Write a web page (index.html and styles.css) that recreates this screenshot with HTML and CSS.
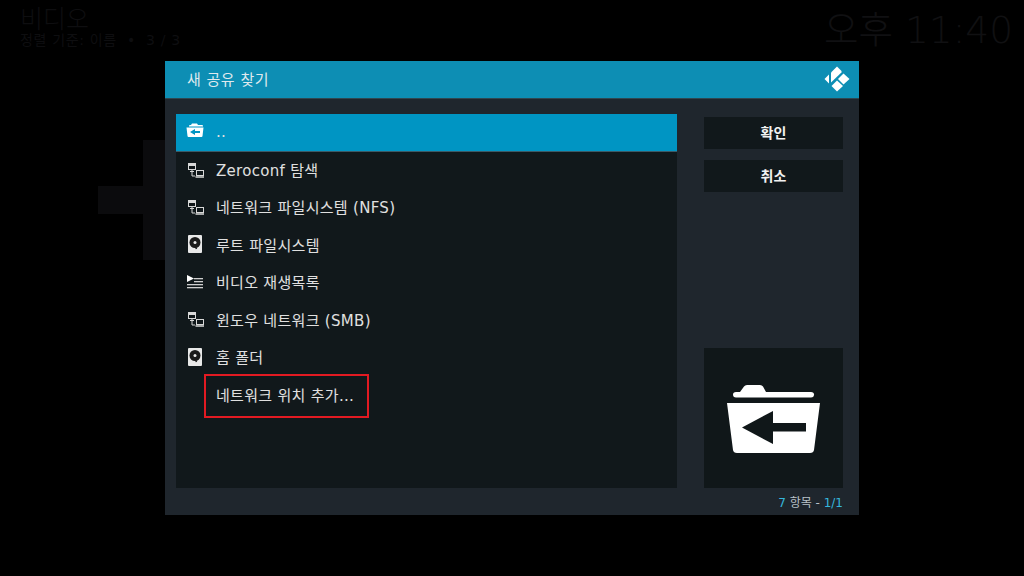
FILE: index.html
```html
<!DOCTYPE html>
<html lang="ko">
<head>
<meta charset="utf-8">
<title>새 공유 찾기</title>
<link rel="stylesheet" href="styles.css">
</head>
<body>
<svg class="bg-plus" width="67" height="120" viewBox="0 0 67 120"><path d="M45 0H67V120H45V74H0V46H45Z" fill="#0b0b0d"/></svg>
<header class="topbar">
  <div class="crumbs">
    <div class="crumb-title">비디오</div>
    <div class="crumb-sub">정렬 기준: 이름 &nbsp;•&nbsp; 3 / 3</div>
  </div>
  <div class="clock">오후 11:40</div>
</header>
<main class="dialog">
  <div class="dialog-head">
    <span class="dialog-title">새 공유 찾기</span>
    <svg class="logo" width="26" height="26" viewBox="0 0 26 26" fill="#fff">
      <path d="M0.500 13L5 8.500V17.500Z"/>
      <path d="M13 0.500L17 4.500Q18 5.500 17.400 6.500L7 16.500V6.500Z"/>
      <path d="M19.500 7.500L25.500 13L19.500 18.500L14 13Z"/>
      <path d="M13 14.500L19 20L13 25.500L7.500 20Z"/>
    </svg>
  </div>
  <div class="dialog-body">
    <ul class="list">
      <li class="row selected">
        <svg class="ico" width="20" height="20" viewBox="0 0 20 20"><use href="#i-up"/></svg>
        <span>..</span>
      </li>
      <li class="row"><svg class="ico" width="20" height="20" viewBox="0 0 20 20"><use href="#i-net"/></svg><span>Zeroconf 탐색</span></li>
      <li class="row"><svg class="ico" width="20" height="20" viewBox="0 0 20 20"><use href="#i-net"/></svg><span>네트워크 파일시스템 (NFS)</span></li>
      <li class="row"><svg class="ico" width="20" height="20" viewBox="0 0 20 20"><use href="#i-hdd"/></svg><span>루트 파일시스템</span></li>
      <li class="row"><svg class="ico" width="20" height="20" viewBox="0 0 20 20"><use href="#i-pl"/></svg><span>비디오 재생목록</span></li>
      <li class="row"><svg class="ico" width="20" height="20" viewBox="0 0 20 20"><use href="#i-net"/></svg><span>윈도우 네트워크 (SMB)</span></li>
      <li class="row"><svg class="ico" width="20" height="20" viewBox="0 0 20 20"><use href="#i-hdd"/></svg><span>홈 폴더</span></li>
      <li class="row"><span class="ico"></span><span class="mark">네트워크 위치 추가...</span></li>
    </ul>
    <aside class="side">
      <button class="btn">확인</button>
      <button class="btn">취소</button>
      <div class="preview">
        <svg width="93" height="69" viewBox="0 0 93 69" fill="#fff">
          <path d="M13 7L17 1.500Q18 0 20 0H33Q35 0 36 1.500L39 7Z"/>
          <path d="M6 9.500Q6 7 9 7H84Q87 7 87 9.500Q87 12.500 84 12.500H9Q6 12.500 6 9.500Z"/>
          <path fill-rule="evenodd" d="M0 18H93L87 65Q86.500 68 83 68H10Q6.500 68 6 65ZM15 42.500L46 59V46.500H79V38H46V26Z"/>
        </svg>
      </div>
    </aside>
  </div>
  <div class="dialog-foot"><b>7</b> 항목 - <b>1/1</b></div>
</main>
<svg width="0" height="0" class="defs">
  <defs>
    <g id="i-up" fill="#fff">
      <path d="M4 4Q4 3 5 3H6L7 1.500H12L13 3H17Q18 3 18 4V4.500H4Z"/>
      <path fill-rule="evenodd" d="M1.500 5.500H18.500L17.500 14Q17.400 15 16.500 15H3.500Q2.600 15 2.500 14ZM5 10L10 13V11H15V9H10V7Z"/>
    </g>
    <g id="i-net" fill="none" stroke="#d8d8d8" stroke-width="1">
      <rect x="3.500" y="3.500" width="7" height="6" fill="#11171a"/>
      <rect x="3.500" y="3.500" width="7" height="2" fill="#d8d8d8"/>
      <path d="M5 11.500H9M7 10V16H10"/>
      <rect x="11.500" y="10.500" width="7" height="5"/>
      <path d="M10.500 17H19" stroke-width="1.500"/>
    </g>
    <g id="i-hdd">
      <rect x="3" y="1" width="14" height="18" rx="1" fill="#e8e8e8"/>
      <circle cx="10" cy="8.500" r="5.500" fill="#1a1a1a"/>
      <circle cx="10" cy="8.500" r="1.500" fill="#e8e8e8"/>
      <path d="M10 12L11.500 15" stroke="#1a1a1a" stroke-width="1.500"/>
    </g>
    <g id="i-pl" fill="#cfcfcf">
      <path d="M2 3L9 6.500L2 10Z" fill="#fff"/>
      <rect x="9" y="6" width="9" height="1.300"/>
      <rect x="9" y="9" width="9" height="1.300"/>
      <rect x="2" y="12" width="16" height="1.300"/>
      <rect x="2" y="15" width="16" height="1.300"/>
    </g>
  </defs>
</svg>
</body>
</html>
```
FILE: styles.css
```css
* { box-sizing: border-box; }
html, body { margin: 0; height: 100%; }
body {
  position: relative;
  width: 1024px;
  height: 576px;
  overflow: hidden;
  background: #000;
  font-family: "DejaVu Sans", "Noto Sans CJK KR", sans-serif;
  color: #e8e8e8;
}
.defs { position: absolute; }
.bg-plus { position: absolute; left: 98px; top: 140px; }
.topbar {
  display: flex;
  justify-content: space-between;
  padding: 6px 11px 0 20px;
}
.crumb-title { font-size: 25px; line-height: 27px; color: #0e0e10; font-weight: 200; }
.crumb-sub { font-size: 14px; line-height: 15px; color: #0e0e10; letter-spacing: 0.65px; }
.clock { font-size: 37.500px; line-height: 44px; margin-top: 2px; color: #101012; font-weight: 200; }
.dialog {
  position: absolute;
  left: 165px;
  top: 61px;
  width: 694px;
  height: 454px;
  display: flex;
  flex-direction: column;
  background: #1f262d;
}
.dialog-head {
  height: 38px;
  flex: none;
  display: flex;
  align-items: center;
  justify-content: space-between;
  padding: 0 9px 2px 22px;
  background: #0d8eb4;
  border-bottom: 1px solid #2f4650;
}
.dialog-title { font-size: 15px; color: #dfe9ee; letter-spacing: 0.5px; }
.dialog-body {
  flex: 1;
  display: flex;
  justify-content: space-between;
  padding: 15px 16px 0 11px;
  min-height: 0;
}
.list {
  list-style: none;
  margin: 0;
  padding: 0;
  width: 501px;
  height: 374px;
  background: #11181b;
}
.row {
  height: 37.400px;
  display: flex;
  align-items: center;
  gap: 11px;
  padding-left: 9px;
  padding-bottom: 1px;
  font-size: 15px;
  letter-spacing: 0.3px;
  color: #e0e0e0;
}
.row.selected {
  background: #0095c3;
  box-shadow: 0 1px 0 #3c5a66;
}
.ico { flex: none; width: 20px; height: 20px; display: block; }
.mark {
  margin: 5px 0 0 -12px;
  padding: 0 10px 3px;
  height: 44px;
  width: 165px;
  display: flex;
  align-items: center;
  border: 2px solid #e21a22;
  white-space: nowrap;
}
.side {
  width: 139px;
  display: flex;
  flex-direction: column;
  gap: 11px;
  padding-top: 3px;
  height: 374px;
}
.btn {
  height: 32px;
  flex: none;
  border: 0;
  padding: 0 0 3px;
  background: #11181b;
  color: #f2f2f2;
  font: bold 14px "DejaVu Sans", "Noto Sans CJK KR", sans-serif;
}
.preview {
  margin-top: auto;
  height: 140px;
  display: flex;
  align-items: center;
  justify-content: center;
  background: #101719;
  padding-top: 3px;
}
.dialog-foot {
  height: 27px;
  flex: none;
  padding: 0 16px 0 0;
  text-align: right;
  font-size: 12px;
  line-height: 30px;
  color: #b9c2c8;
}
.dialog-foot b { font-weight: normal; color: #35b6dc; }
```
